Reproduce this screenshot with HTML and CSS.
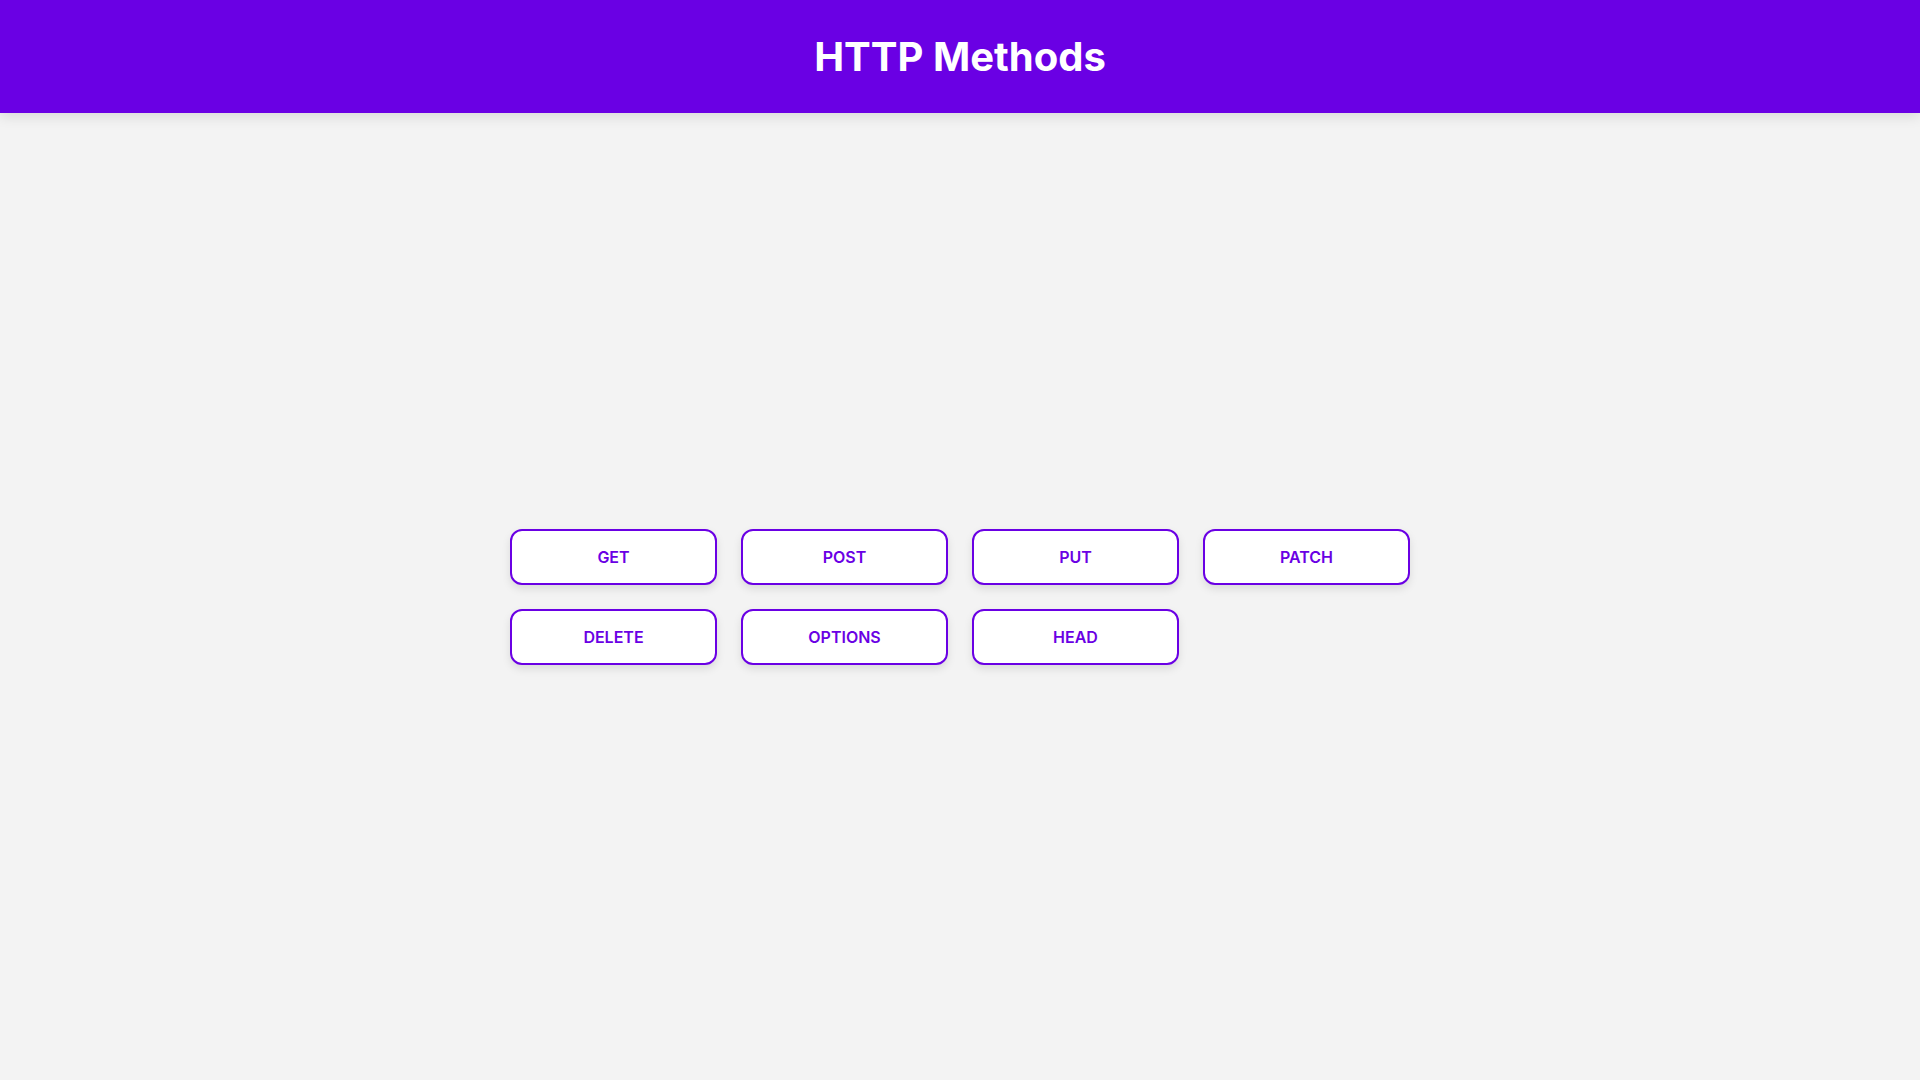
FILE: index.html
```html
<!DOCTYPE html>
<html lang="en">
<head>
<meta charset="utf-8">
<title>HTTP Methods</title>
<link rel="stylesheet" href="styles.css">
</head>
<body>
<header class="topbar">
  <h1 class="title">HTTP Methods</h1>
</header>
<main class="content">
  <div class="methods">
    <button class="method">GET</button>
    <button class="method">POST</button>
    <button class="method">PUT</button>
    <button class="method">PATCH</button>
    <button class="method">DELETE</button>
    <button class="method">OPTIONS</button>
    <button class="method">HEAD</button>
  </div>
</main>
</body>
</html>
```
FILE: styles.css
```css
* { box-sizing: border-box; }
html, body { height: 100%; }
body {
  margin: 0;
  background: #f3f3f3;
  font-family: Inter, "Noto Sans", sans-serif;
  display: flex;
  flex-direction: column;
}
.topbar {
  height: 113px;
  background: #6a00e4;
  display: flex;
  align-items: center;
  justify-content: center;
  box-shadow: 0 4px 12px rgba(0,0,0,0.1);
  position: relative;
  z-index: 1;
}
.title {
  margin: 0;
  color: #ffffff;
  font-size: 40px;
  font-weight: 700;
}
.content {
  flex: 1;
  display: flex;
  align-items: center;
  justify-content: center;
}
.methods {
  display: grid;
  grid-template-columns: repeat(4, 207px);
  grid-auto-rows: 56px;
  gap: 24px;
}
.method {
  background: #ffffff;
  border: 2px solid #6a00e4;
  border-radius: 12px;
  color: #6a00e4;
  font-family: Inter, "Noto Sans", sans-serif;
  font-size: 16px;
  font-weight: 600;
  box-shadow: 0 4px 8px rgba(0,0,0,0.1);
  cursor: pointer;
}
```
